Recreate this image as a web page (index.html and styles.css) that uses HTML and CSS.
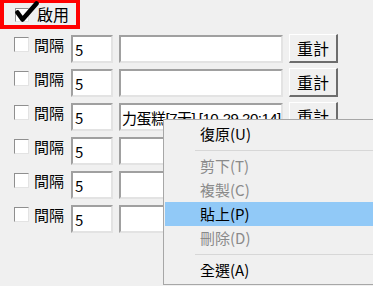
FILE: index.html
```html
<!DOCTYPE html>
<html>

<head>
    <meta charset='utf-8'>
    <title>間隔重計</title>
    <meta name='viewport' content='width=device-width, initial-scale=1'>
    <link rel="stylesheet" href="styles.css">
</head>

<body>
    <div class="enable_box">
        <span class="chk big_chk">
            <svg class="tick" width="26" height="22" viewBox="0 0 26 22">
                <path d="M3.5 11.5 L8.5 18.5 L22.5 2.5" fill="none" stroke="#000" stroke-width="4.6"
                    stroke-linecap="round" stroke-linejoin="round" />
            </svg>
        </span>
        <span class="enable_txt">啟用</span>
    </div>

    <ul class="rows">
        <li class="row">
            <span class="chk"></span><span class="lbl">間隔</span>
            <input type="text" class="num" value="5"><input type="text" class="txt" value="">
            <button class="btn_reset">重計</button>
        </li>
        <li class="row">
            <span class="chk"></span><span class="lbl">間隔</span>
            <input type="text" class="num" value="5"><input type="text" class="txt" value="">
            <button class="btn_reset">重計</button>
        </li>
        <li class="row">
            <span class="chk"></span><span class="lbl">間隔</span>
            <input type="text" class="num" value="5"><input type="text" class="txt" value="力蛋糕[7天] [10-29 20:14]">
            <button class="btn_reset">重計</button>
        </li>
        <li class="row">
            <span class="chk"></span><span class="lbl">間隔</span>
            <input type="text" class="num" value="5"><input type="text" class="txt" value="">
            <button class="btn_reset">重計</button>
        </li>
        <li class="row">
            <span class="chk"></span><span class="lbl">間隔</span>
            <input type="text" class="num" value="5"><input type="text" class="txt" value="">
            <button class="btn_reset">重計</button>
        </li>
        <li class="row">
            <span class="chk"></span><span class="lbl">間隔</span>
            <input type="text" class="num" value="5"><input type="text" class="txt" value="">
            <button class="btn_reset">重計</button>
        </li>
    </ul>

    <!-- 우클릭 메뉴 -->
    <ul class="ctx_menu">
        <li class="item">復原(U)</li>
        <li class="sep"></li>
        <li class="item off">剪下(T)</li>
        <li class="item off">複製(C)</li>
        <li class="item on">貼上(P)</li>
        <li class="item off">刪除(D)</li>
        <li class="sep"></li>
        <li class="item">全選(A)</li>
    </ul>
</body>

</html>
```

FILE: styles.css
```css
* {
    margin: 0;
    padding: 0;
    box-sizing: border-box;
}

html,
body {
    overflow: hidden;
}

body {
    position: relative;
    width: 373px;
    height: 286px;
    background-color: #f0f0f0;
    font-family: "Noto Sans CJK TC", "Noto Sans", sans-serif;
    color: #000;
}

.enable_box {
    display: flex;
    align-items: center;
    width: 80px;
    height: 29px;
    border: 4px solid #ff0000;
    border-top-width: 3px;
}

.chk {
    display: inline-block;
    width: 15px;
    height: 15px;
    background-color: #fff;
    border: 1px solid;
    border-color: #8f8f8f #e3e3e3 #e3e3e3 #8f8f8f;
    flex-shrink: 0;
}

.big_chk {
    position: relative;
    margin-left: 11px;
    margin-top: 2px;
    width: 14px;
    height: 14px;
}

.tick {
    position: absolute;
    left: -2px;
    top: -8px;
}

.enable_txt {
    margin-left: 8px;
    font-size: 16px;
    line-height: 20px;
}

.rows {
    list-style-type: none;
    margin-top: 3px;
    padding-left: 14px;
}

.row {
    display: flex;
    align-items: flex-start;
    height: 34px;
}

.row>.chk {
    margin-top: 5px;
}

.lbl {
    margin-left: 5px;
    margin-top: 3px;
    width: 30px;
    font-size: 15px;
    line-height: 20px;
}

input {
    height: 28px;
    margin-top: 3px;
    border: 2px solid;
    border-color: #a0a0a0 #e3e3e3 #e3e3e3 #a0a0a0;
    outline: none;
    background-color: #fff;
    font-family: "Noto Sans CJK TC", "Noto Sans", sans-serif;
    font-size: 15px;
    padding-left: 2px;
    color: #000;
}

.num {
    margin-left: 7px;
    width: 42px;
}

.txt {
    margin-left: 6px;
    width: 164px;
    padding-left: 1px;
    padding-right: 0;
    font-family: "Liberation Sans", "Noto Sans CJK TC", sans-serif;
    letter-spacing: -0.5px;
}

.btn_reset {
    margin-left: 6px;
    margin-top: 2px;
    width: 49px;
    height: 29px;
    background-color: #f0f0f0;
    border: 1px solid;
    border-width: 1px 2px 2px 1px;
    border-color: #fff #6d6d6d #6d6d6d #fff;
    font-family: "Noto Sans CJK TC", "Noto Sans", sans-serif;
    font-size: 16px;
    color: #000;
}

.ctx_menu {
    position: absolute;
    left: 163px;
    top: 119px;
    width: 210px;
    list-style-type: none;
    background-color: #f0f0f0;
    border: 1px solid #a7a7a7;
    border-right: none;
    padding: 2px 0 2px 1px;
}

.ctx_menu>.item {
    height: 24px;
    line-height: 24px;
    padding-left: 35px;
    font-size: 15px;
    color: #000;
}

.ctx_menu>.off {
    color: #8a8a8a;
}

.ctx_menu>.on {
    background-color: #91c9f7;
}

.ctx_menu>.sep {
    height: 8px;
    margin-left: 30px;
    border-top: 4px solid transparent;
}

.ctx_menu>.sep::after {
    content: "";
    display: block;
    height: 1px;
    background-color: #d7d7d7;
}
```
